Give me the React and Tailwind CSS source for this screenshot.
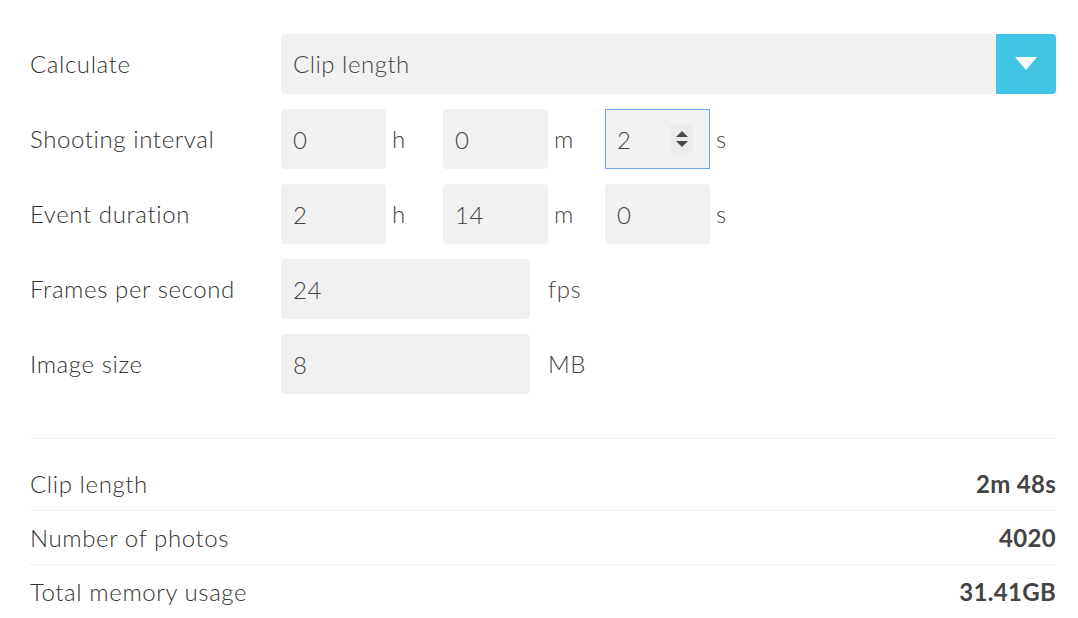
import React from "react";

const font = { fontFamily: "Lato, 'Open Sans', sans-serif" };

function Field({ value, w = "w-[105px]", focused = false }) {
  if (focused) {
    return (
      <div className={`${w} h-[60px] bg-[#f1f1f1] border border-[#76a4f5] flex items-center pl-[11px] pr-[16px] text-[24px] font-light tracking-[0.5px] text-[#444]`}>
        <span className="flex-1 pt-[2px]">{value}</span>
        <div className="w-[23px] h-[28px] bg-[#ebebeb] flex items-center justify-center">
          <svg width="14" height="20" viewBox="0 0 14 20">
            <path d="M1 8 L7 2 L13 8 Z" fill="#4a4a4a" />
            <path d="M1 12 L7 18 L13 12 Z" fill="#4a4a4a" />
          </svg>
        </div>
      </div>
    );
  }
  return (
    <div className={`${w} h-[60px] bg-[#f1f1f1] rounded-[4px] flex items-center px-[12px] text-[24px] font-light tracking-[0.5px] text-[#444]`}>
      <span className="pt-[2px]">{value}</span>
    </div>
  );
}

function Unit({ children, className = "" }) {
  return <span className={`text-[24px] font-light tracking-[0.5px] text-[#444] self-start pt-[12px] ${className}`}>{children}</span>;
}

function Row({ label, children }) {
  return (
    <div className="flex items-center h-[60px]">
      <div className="w-[251px] text-[24px] font-light tracking-[0.6px] text-[#333]">{label}</div>
      <div className="flex-1 flex items-stretch">{children}</div>
    </div>
  );
}

export default function App() {
  return (
    <div style={font} className="w-[1078px] h-[618px] bg-white px-[22px] pt-[34px] overflow-hidden">
      <div className="pl-[8px]">
        <div className="flex flex-col gap-[15px]">
          <Row label="Calculate">
            <div className="flex-1 h-[60px] bg-[#f1f1f1] rounded-[4px] flex items-center overflow-hidden">
              <span className="flex-1 pl-[12px] text-[24px] font-light tracking-[0.5px] text-[#444]">Clip length</span>
              <div className="w-[60px] h-[60px] bg-[#40c5e4] flex items-center justify-center">
                <svg width="22" height="14" viewBox="0 0 22 14">
                  <path d="M0 0 L22 0 L11 13 Z" fill="#ffffff" />
                </svg>
              </div>
            </div>
          </Row>
          <Row label="Shooting interval">
            <Field value="0" />
            <Unit className="w-[57px] pl-[6px]">h</Unit>
            <Field value="0" />
            <Unit className="w-[57px] pl-[6px]">m</Unit>
            <Field value="2" focused />
            <Unit className="pl-[6px]">s</Unit>
          </Row>
          <Row label="Event duration">
            <Field value="2" />
            <Unit className="w-[57px] pl-[6px]">h</Unit>
            <Field value="14" />
            <Unit className="w-[57px] pl-[6px]">m</Unit>
            <Field value="0" />
            <Unit className="pl-[6px]">s</Unit>
          </Row>
          <Row label="Frames per second">
            <Field value="24" w="w-[249px]" />
            <Unit className="pl-[18px]">fps</Unit>
          </Row>
          <Row label="Image size">
            <Field value="8" w="w-[249px]" />
            <Unit className="pl-[18px]">MB</Unit>
          </Row>
        </div>
      </div>
      <div className="ml-[8px] mt-[44px] border-t border-[#eeeeee] pt-[18px]">
        {[
          ["Clip length", "2m 48s"],
          ["Number of photos", "4020"],
          ["Total memory usage", "31.41GB"],
        ].map(([k, v], i) => (
          <div
            key={k}
            className={`h-[54px] flex items-center justify-between text-[24px] ${i < 2 ? "border-b border-[#eeeeee]" : ""}`}
          >
            <span className="text-[#333] font-light tracking-[0.6px]">{k}</span>
            <span className="text-[#444] font-bold tracking-[0.3px]">{v}</span>
          </div>
        ))}
      </div>
    </div>
  );
}
